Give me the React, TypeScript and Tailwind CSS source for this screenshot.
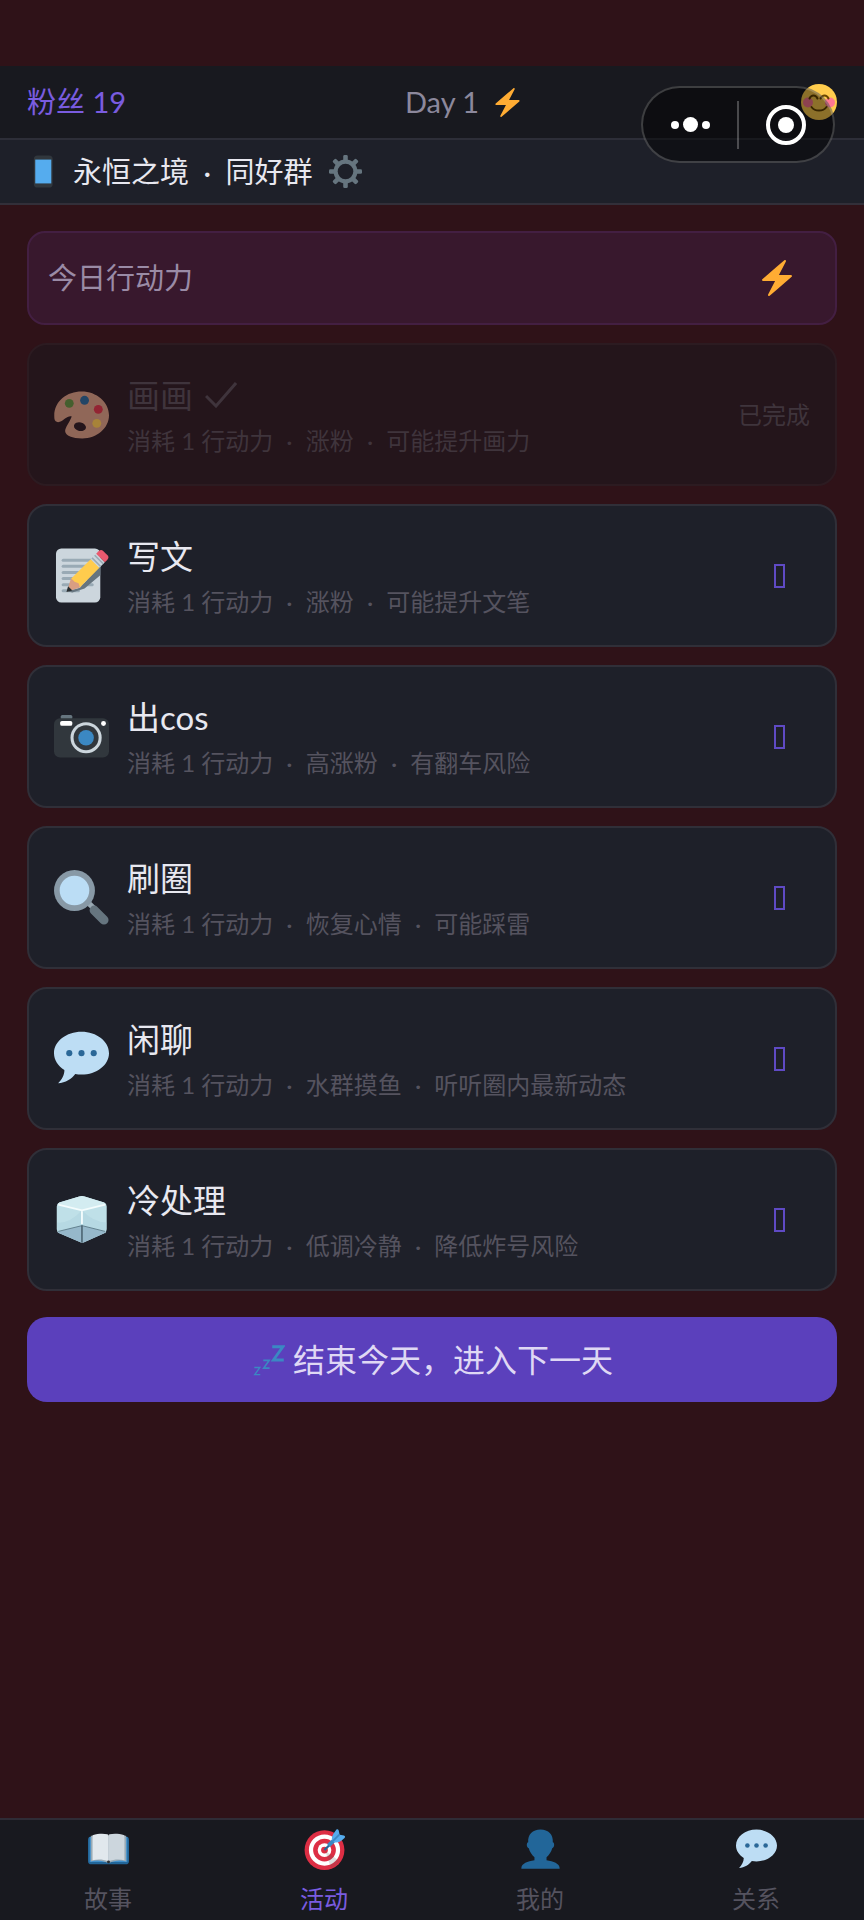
import { Fragment, useState } from "react";
import type { ReactNode } from "react";

type IconProps = { className?: string };

function Svg({ className, children }: IconProps & { children: ReactNode }) {
  return (
    <svg viewBox="0 0 36 36" aria-hidden="true" className={className}>
      {children}
    </svg>
  );
}

function BoltIcon({ className }: IconProps) {
  return (
    <Svg className={className}>
      <path
        fill="#ffac33"
        d="M32.938 15.651C32.792 15.26 32.418 15 32 15H19.925L26.89 1.458c.219-.426.106-.947-.271-1.243C26.437.071 26.218 0 26 0c-.233 0-.466.082-.653.243L18 6.588 3.347 19.243c-.316.273-.43.714-.284 1.105S3.582 21 4 21h12.075L9.11 34.542c-.219.426-.106.947.271 1.243.182.144.401.215.619.215.233 0 .466-.082.653-.243L18 29.412l14.653-12.655c.317-.273.43-.714.285-1.106z"
      />
    </Svg>
  );
}

function FaceIcon({ className }: IconProps) {
  return (
    <Svg className={className}>
      <circle cx="18" cy="18" r="18" fill="#ffcc4d" />
      <circle cx="7" cy="18.500" r="5" fill="#ff7892" />
      <circle cx="29" cy="18.500" r="5" fill="#ff7892" />
      <g fill="none" stroke="#664500" strokeWidth="2" strokeLinecap="round">
        <path d="M8.500 14.500c1.800-4 6.200-4 8 0" />
        <path d="M19.500 14.500c1.800-4 6.200-4 8 0" />
        <path d="M10.500 23c3.500 4.800 11.500 4.800 15 0" />
      </g>
    </Svg>
  );
}

function PhoneIcon({ className }: IconProps) {
  return (
    <Svg className={className}>
      <rect x="7.500" y="0.500" width="20.500" height="35" rx="4" fill="#31373d" />
      <rect x="9" y="5" width="17.500" height="26" fill="#55acee" />
    </Svg>
  );
}

function GearIcon({ className }: IconProps) {
  return (
    <Svg className={className}>
      <g fill="#66757f">
        {[0, 45, 90, 135].map((deg) => (
          <rect
            key={deg}
            x="15.500"
            y="0"
            width="5"
            height="36"
            rx="1.500"
            transform={`rotate(${deg} 18 18)`}
          />
        ))}
        <circle cx="18" cy="18" r="13" />
      </g>
      <circle cx="18" cy="18" r="8.500" fill="#1e2029" />
    </Svg>
  );
}

function PaletteIcon({ className }: IconProps) {
  return (
    <Svg className={className}>
      <path
        fill="#d99e82"
        d="M.3 21C-1 10 8 3 18 3s18 7 18 15.500S28 33.700 18.500 33.700C12 33.700 7.500 31.800 7.300 29c-.1-2.500 2.700-5.500 4.300-9.700-3-.7-5.100 2.700-7.800 3.500-1.800.6-3.200-.2-3.500-1.800z"
      />
      <ellipse cx="17" cy="26" rx="4" ry="2.800" transform="rotate(12 17 26)" fill="#24151b" />
      <circle cx="10" cy="10.700" r="2.900" fill="#5c913b" />
      <circle cx="20" cy="8.700" r="2.900" fill="#226699" />
      <circle cx="29" cy="14.600" r="2.900" fill="#dd2e44" />
      <circle cx="28" cy="23.800" r="2.900" fill="#ffcc4d" />
    </Svg>
  );
}

function MemoIcon({ className }: IconProps) {
  return (
    <Svg className={className}>
      <rect x="1.300" y="0.300" width="29" height="35.400" rx="3.500" fill="#ccd6dd" />
      <g fill="#99aab5">
        <rect x="5" y="7" width="21" height="2" rx="1" />
        <rect x="5" y="11" width="21" height="2" rx="1" />
        <rect x="5" y="15" width="21" height="2" rx="1" />
        <rect x="5" y="19" width="21" height="2" rx="1" />
        <rect x="5" y="23" width="21" height="2" rx="1" />
        <rect x="5" y="27" width="12" height="2" rx="1" />
      </g>
      <path fill="#66757f" d="M9 28.500 17 26l13.300-14.500v6.300L20 26.500l-8 2.700z" />
      <g transform="translate(8.500 28.500) rotate(-45)">
        <path fill="#d99e82" d="M0 0 7.500-4h2v8h-2z" />
        <path fill="#292f33" d="M-.5 0 3-2v4z" />
        <path fill="#ffcc4d" d="M8-4h18v8H8L9.200 1.500 8-1z" />
        <rect x="26" y="-4" width="5" height="8" fill="#ccd6dd" />
        <path stroke="#99aab5" strokeWidth="1" d="M27.200-4v8M29.600-4v8" />
        <path fill="#ea596e" d="M31-4h2.200c1.600 0 2.300.8 2.300 2v4c0 1.200-.7 2-2.300 2H31z" />
      </g>
    </Svg>
  );
}

function CameraIcon({ className }: IconProps) {
  return (
    <Svg className={className}>
      <rect x="4.400" y="3.900" width="7.600" height="3" rx="1" fill="#66757f" />
      <rect x="0" y="6" width="36" height="25.700" rx="4" fill="#31373d" />
      <rect x="4" y="7.800" width="8" height="3.200" rx="1.200" fill="#fff" />
      <circle cx="32.400" cy="9.500" r="1.600" fill="#fff" />
      <circle cx="21" cy="18.800" r="10.200" fill="#ccd6dd" />
      <circle cx="21" cy="18.800" r="8.200" fill="#31373d" />
      <circle cx="21" cy="18.800" r="5.100" fill="#3b88c3" />
    </Svg>
  );
}

function SearchIcon({ className }: IconProps) {
  return (
    <Svg className={className}>
      <path stroke="#9aaab4" strokeWidth="3.500" d="m21.500 20.500 5 5" />
      <path stroke="#66757f" strokeWidth="6" strokeLinecap="round" d="m26.300 26.300 6.400 6.400" />
      <circle cx="13.400" cy="13.400" r="13.400" fill="#8899a6" />
      <circle cx="13.400" cy="13.400" r="9.700" fill="#bbddf5" />
    </Svg>
  );
}

function BubbleIcon({ className }: IconProps) {
  return (
    <Svg className={className}>
      <path
        fill="#bdddf4"
        d="M18 .5c9.900 0 18 6.300 18 14s-8.100 14-18 14c-1.400 0-2.800-.1-4.100-.4-2.300 3.300-6.400 5.700-11.200 6.100 2.500-2.400 4.200-5.600 4.100-8.700C2.700 22.900 0 19 0 14.500 0 6.800 8.100.5 18 .5z"
      />
      <g fill="#2a6797">
        <circle cx="10" cy="14.500" r="2" />
        <circle cx="18" cy="14.500" r="2" />
        <circle cx="26" cy="14.500" r="2" />
      </g>
    </Svg>
  );
}

function IceIcon({ className }: IconProps) {
  return (
    <Svg className={className}>
      <path
        fill="#bfe0e8"
        d="M16.500 2.900q1.800-.5 3.500 0l12.800 3.900q1.700.7 1.700 2.700v14.900q0 1.800-1.600 2.600l-12.800 5.700q-1.600.7-3.200 0L3.500 27q-1.700-.8-1.700-2.600V9.500q0-2 1.700-2.700z"
      />
      <path fill="#d3ecf1" d="M16.500 2.900q1.800-.5 3.500 0l12.800 3.900q1 .6 1 1.200l-15.400 4L2.400 8q.3-.8 1.100-1.200z" />
      <path fill="#aed2de" d="M2 20Q10 21 18.300 12v11L2.500 27zM34.300 20Q26 20 18.300 12v11L34 27z" opacity="0.5" />
      <path fill="#96b8ca" d="m18.300 22 15.500 4q-.3.700-.9 1l-12.800 5.700q-1.600.7-3.200 0L3.500 27q-.7-.3-1-1z" />
      <path fill="none" stroke="#f4fcfd" strokeWidth="1.200" d="m2.800 8.300 15.500 3.700L33.500 8.300M18.300 12v9" />
      <path fill="none" stroke="#4f6c79" strokeWidth="0.500" d="m2.800 25.800 15.500-3.800 15.200 3.800" />
      <path stroke="#3f5663" strokeWidth="0.900" d="M18.300 22v11" />
    </Svg>
  );
}

function SleepIcon({ className }: IconProps) {
  return (
    <Svg className={className}>
      <g fill="none" stroke="#3b88c3">
        <path strokeWidth="3" d="M22.500 4h11.200l-10 14h11" />
        <path strokeWidth="1.800" d="M13 18.500h6.200l-5.700 8h6.200" />
        <path strokeWidth="1.500" d="M3.500 26h5.800L4 33.500h5.800" />
      </g>
    </Svg>
  );
}

function BookIcon({ className }: IconProps) {
  return (
    <Svg className={className}>
      <rect x="0" y="6.500" width="36" height="24.500" rx="3" fill="#226699" />
      <path fill="#55acee" opacity="0.6" d="M1.500 7h33v22h-33z" />
      <path fill="#99aab5" d="M2.500 6h31v22.500c-5-1.500-10-1-15.500 1.500-5.500-2.500-10.500-3-15.500-1.500z" />
      <path fill="#e1e8ed" d="M4 5.500C9 3.700 14 4 17 4.500c.6.200 1 .7 1 1.500v22.500c-5-2-9.500-2-14-1z" />
      <path fill="#ccd6dd" d="M32 5.500C27 3.700 22 4 19 4.500c-.6.200-1 .7-1 1.500v22.500c5-2 9.500-2 14-1z" />
      <circle cx="18" cy="29" r="1.300" fill="#292f33" />
    </Svg>
  );
}

function TargetIcon({ className }: IconProps) {
  return (
    <Svg className={className}>
      <circle cx="18" cy="18.500" r="17.500" fill="#dd2e44" />
      <circle cx="18" cy="18.500" r="13.700" fill="#fff" />
      <circle cx="18" cy="18.500" r="10" fill="#dd2e44" />
      <circle cx="18" cy="18.500" r="6" fill="#fff" />
      <circle cx="18" cy="18.500" r="3" fill="#dd2e44" />
      <path fill="#58595b" opacity="0.2" d="m18.500 18.800 12.800 9.500a17 17 0 0 1-7.500 6z" />
      <path stroke="#226699" strokeWidth="2" d="m18 18.500 8-8" />
      <path stroke="#3b88c3" strokeWidth="3.500" d="m21.500 14.500 8-7.500" />
      <path fill="#55acee" d="M25 11c-1.500-3 0-6 3.500-10.500.8-.6 1.600-.2 2 .8L31.300 5l3.800.8c1 .3 1.200 1.200.5 2-4 4-7.500 5-10.600 3.200z" />
      <path stroke="#3b88c3" strokeWidth="1.500" d="m24 12 7-7" />
    </Svg>
  );
}

function PersonIcon({ className }: IconProps) {
  return (
    <Svg className={className}>
      <path
        fill="#226699"
        d="M18 .5c7 0 11.300 4.500 10.800 11.200 1.800.3 1.500 4.700-.5 5.300-.9 3.300-2.800 6-5 7.800v2.700c6 .8 11.500 3 11.500 6.800v.7H1.200v-.7c0-3.800 5.500-6 11.500-6.800v-2.700C10.500 23 8.600 20.300 7.700 17c-2-.6-2.300-5-.5-5.300C6.700 5 11 .5 18 .5z"
      />
    </Svg>
  );
}

function DotList({ items }: { items: string[] }) {
  return (
    <>
      {items.map((item, index) => (
        <Fragment key={index}>
          {index > 0 && <span className="mx-[7px]"> · </span>}
          {item}
        </Fragment>
      ))}
    </>
  );
}

const actions = [
  { name: "写文", desc: ["消耗 1 行动力", "涨粉", "可能提升文笔"], Icon: MemoIcon },
  { name: "出cos", desc: ["消耗 1 行动力", "高涨粉", "有翻车风险"], Icon: CameraIcon },
  { name: "刷圈", desc: ["消耗 1 行动力", "恢复心情", "可能踩雷"], Icon: SearchIcon },
  { name: "闲聊", desc: ["消耗 1 行动力", "水群摸鱼", "听听圈内最新动态"], Icon: BubbleIcon },
  { name: "冷处理", desc: ["消耗 1 行动力", "低调冷静", "降低炸号风险"], Icon: IceIcon },
];

const tabs = [
  { name: "故事", Icon: BookIcon },
  { name: "活动", Icon: TargetIcon },
  { name: "我的", Icon: PersonIcon },
  { name: "关系", Icon: BubbleIcon },
];

export default function App() {
  const [tab, setTab] = useState("活动");

  return (
    <div
      lang="zh-CN"
      className="relative flex min-h-screen flex-col bg-[#2f1218] pt-[66px] font-['Lato','Noto_Sans_CJK_SC',sans-serif] text-[#e8e8f0]"
    >
      <header>
        <div className="flex h-[74px] items-center justify-between border-b-2 border-[#2d2e38] bg-[#18191f] px-[27px] text-[29px]">
          <span className="text-[#7a5ce0]">粉丝 19</span>
          <span className="flex items-center gap-[14px] text-[#8c889c]">
            Day 1
            <BoltIcon className="size-[29px]" />
          </span>
          <FaceIcon className="size-9" />
        </div>
        <div className="flex h-[65px] items-center gap-[13px] border-b-2 border-[#322f39] bg-[#1e2029] px-[27px]">
          <PhoneIcon className="size-[33px]" />
          <h1 className="text-[29px]">
            <DotList items={["永恒之境", "同好群"]} />
          </h1>
          <button type="button" aria-label="设置" className="ml-1">
            <GearIcon className="size-[33px]" />
          </button>
        </div>
      </header>

      {/* mini program capsule, floats over both bars */}
      <div className="absolute top-[86px] right-[29px] flex h-[77px] w-[194px] items-center rounded-full border-2 border-white/20 bg-black/45">
        <button type="button" aria-label="更多" className="flex flex-1 items-center justify-center gap-1">
          <span className="size-2 rounded-full bg-white" />
          <span className="size-[15px] rounded-full bg-white" />
          <span className="size-2 rounded-full bg-white" />
        </button>
        <span className="h-12 w-[2px] bg-white/25" />
        <button type="button" aria-label="关闭" className="flex flex-1 justify-center">
          <span className="flex size-10 items-center justify-center rounded-full border-4 border-white">
            <span className="size-4 rounded-full bg-white" />
          </span>
        </button>
      </div>

      <main className="flex flex-1 flex-col gap-[18px] px-[27px] pt-[26px]">
        <div className="flex h-[94px] items-center justify-between rounded-[18px] border-2 border-[#431f42] bg-[#38182d] pr-10 pl-[19px]">
          <span className="text-[29px] text-[#9a8ba6]">今日行动力</span>
          <BoltIcon className="size-9" />
        </div>

        <button
          type="button"
          disabled
          className="flex h-[143px] items-center gap-[18px] rounded-[20px] border-2 border-[#2c1b21] bg-[#24151b] px-[25px] text-left text-[#3f343c]"
        >
          <PaletteIcon className="size-[55px] opacity-60" />
          <span className="flex flex-1 flex-col gap-2">
            <span className="flex items-center gap-3 text-[33px] leading-[44px]">
              画画
              <svg viewBox="0 0 32 26" aria-hidden="true" className="w-8">
                <path d="m1 14 10 10L31 1" fill="none" stroke="currentColor" strokeWidth="3" />
              </svg>
            </span>
            <span className="text-2xl leading-8">
              <DotList items={["消耗 1 行动力", "涨粉", "可能提升画力"]} />
            </span>
          </span>
          <span className="text-2xl">已完成</span>
        </button>

        {actions.map(({ name, desc, Icon }) => (
          <button
            key={name}
            type="button"
            className="flex h-[143px] items-center gap-[18px] rounded-[20px] border-2 border-[#302f38] bg-[#1e2029] px-[25px] text-left"
          >
            <Icon className="size-[55px]" />
            <span className="flex flex-1 flex-col gap-2">
              <span className="text-[33px] leading-[44px]">{name}</span>
              <span className="text-2xl leading-8 text-[#55535f]">
                <DotList items={desc} />
              </span>
            </span>
            <span aria-hidden="true" className="mr-[25px] h-6 w-[11px] border-2 border-[#5f4ac4]" />
          </button>
        ))}

        <button
          type="button"
          className="mt-2 flex h-[85px] items-center justify-center gap-2 rounded-[20px] bg-[#5b40bc] text-[32px] text-[#dfd8f4]"
        >
          <SleepIcon className="size-[34px]" />
          结束今天，进入下一天
        </button>
      </main>

      <nav className="sticky bottom-0 flex h-[102px] border-t-2 border-[#2f2c36] bg-[#18191f]">
        {tabs.map(({ name, Icon }) => (
          <button
            key={name}
            type="button"
            onClick={() => setTab(name)}
            className={
              "flex flex-1 flex-col items-center gap-[13px] pt-[9px] text-2xl leading-8 " +
              (tab === name ? "text-[#7a5ce0]" : "text-[#55535f]")
            }
          >
            <Icon className="size-[41px]" />
            {name}
          </button>
        ))}
      </nav>
    </div>
  );
}
